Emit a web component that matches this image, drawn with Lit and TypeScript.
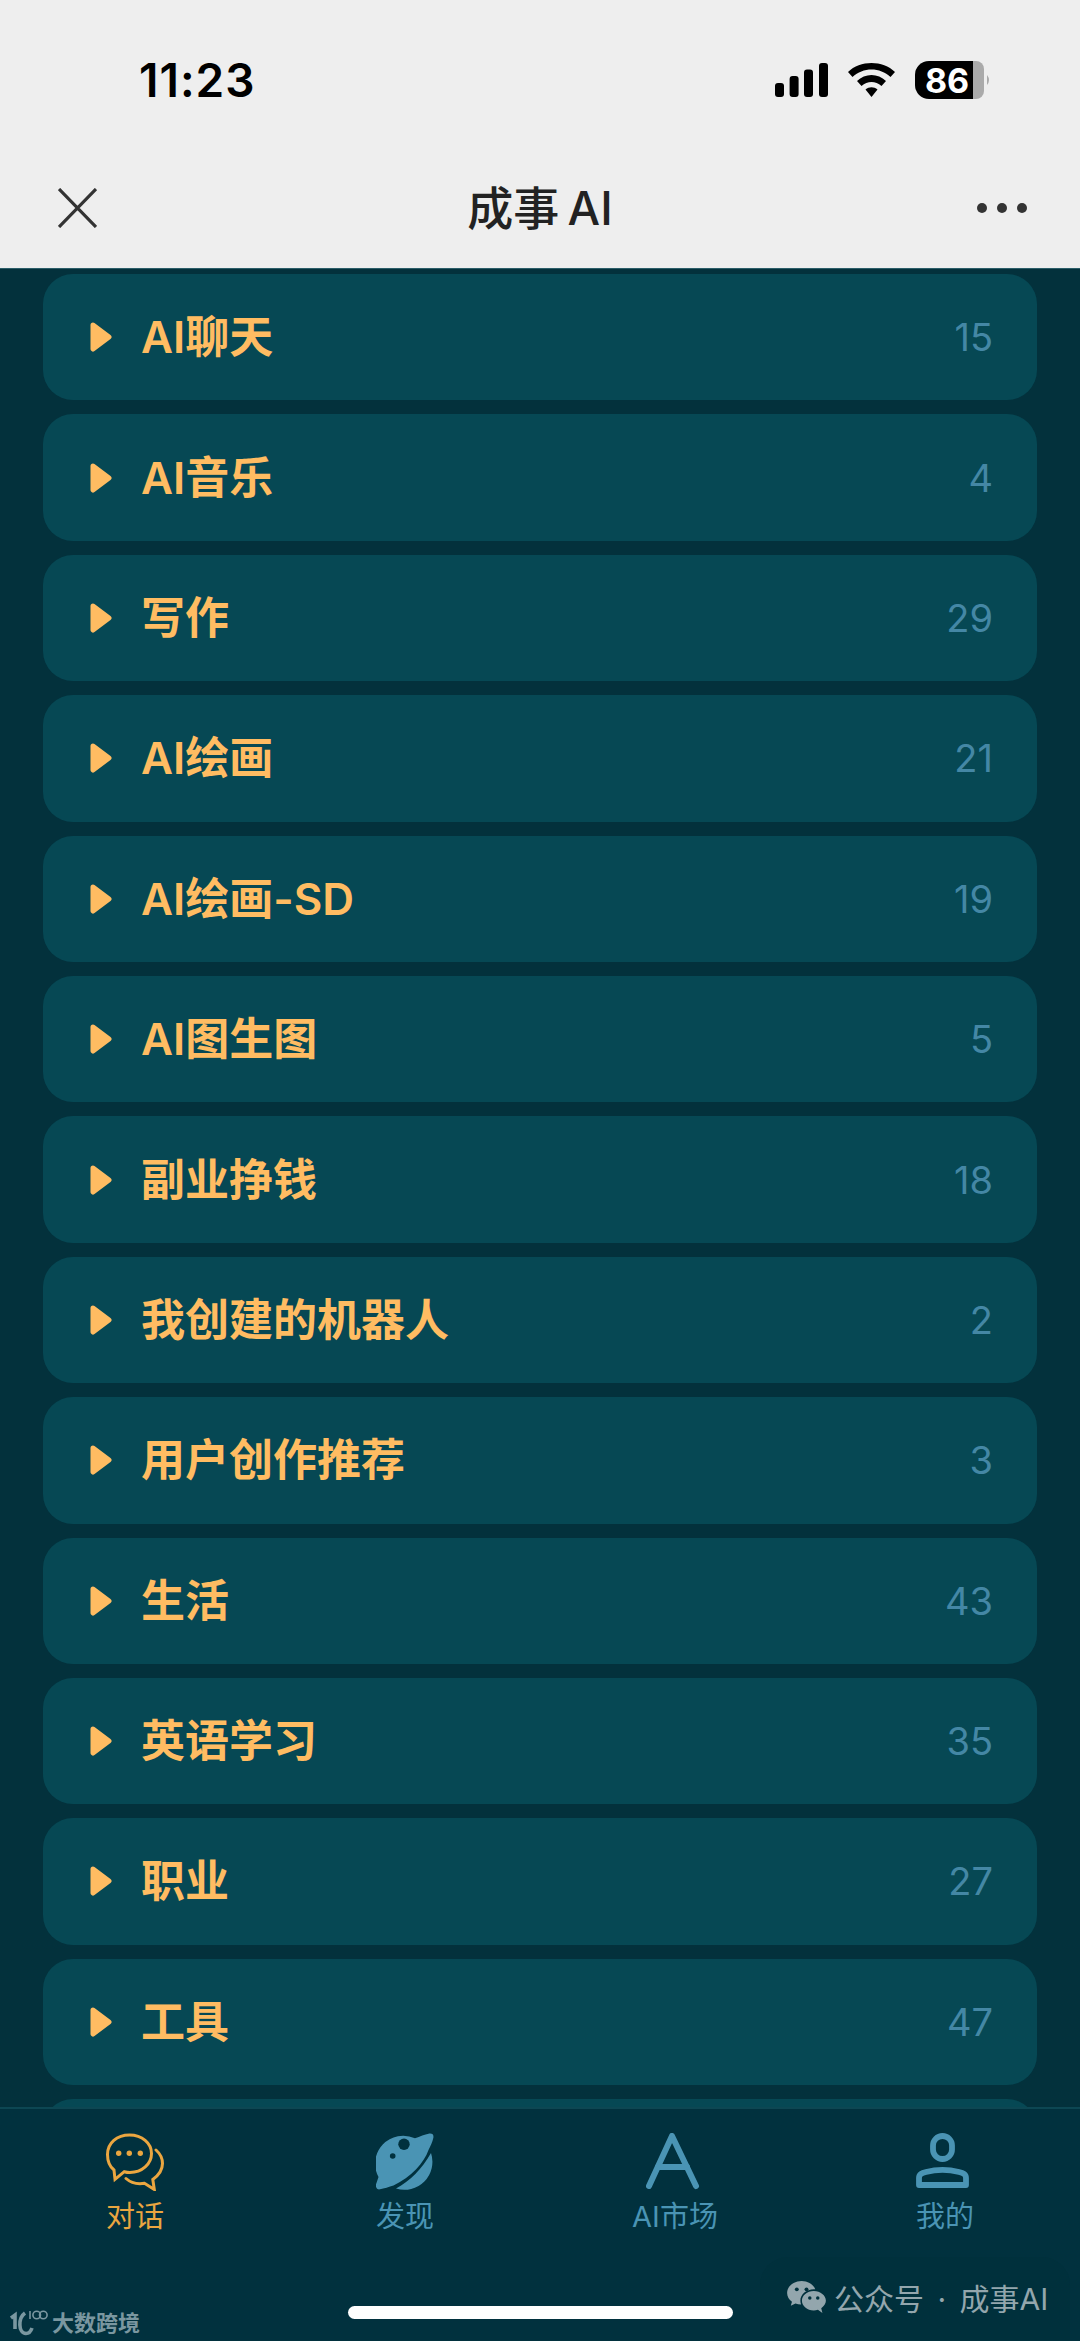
import {css, html, LitElement, svg} from 'lit';
import {customElement} from 'lit/decorators.js';

const categories: [string, number][] = [
  ['AI聊天', 15],
  ['AI音乐', 4],
  ['写作', 29],
  ['AI绘画', 21],
  ['AI绘画-SD', 19],
  ['AI图生图', 5],
  ['副业挣钱', 18],
  ['我创建的机器人', 2],
  ['用户创作推荐', 3],
  ['生活', 43],
  ['英语学习', 35],
  ['职业', 27],
  ['工具', 47],
  ['', 0],
];

const chatIcon = svg`
  <g fill="none" stroke="currentColor" stroke-width="3" stroke-linejoin="miter" stroke-linecap="round">
    <path d="M9 46.3 L8 37 C3 33 1.5 27 1.5 21.5 C1.5 10 11 2 23.5 2 C36 2 45.5 10 45.5 20.5 C45.5 31 36 39.5 24 39.5 C22 39.5 20 39.2 18.3 38.7 Z"/>
    <path d="M50 17 C54.5 21 56.5 26 56.5 30.5 C56.5 36 53 42 46.8 46.5 L48.3 56.5 L38.5 50.3 C31 51.5 25 50 20 45.5"/>
  </g>
  <g fill="currentColor">
    <circle cx="12.7" cy="20.3" r="2.7"/>
    <circle cx="23.3" cy="20.3" r="2.7"/>
    <circle cx="34.3" cy="20.3" r="2.7"/>
  </g>`;

const planetIcon = svg`
  <path fill="currentColor" d="M39 5.3 C44 3.5 49 1.5 52.5 0.8 C56.5 0 58 2 57.3 5 C56.5 9 54.5 13 52.5 17 C48 30 35 44 17.5 52.5 C13 54 8 55.5 4 56.3 C0.5 57 -1 53 0.3 50.5 L2.5 44 A28 28 0 0 1 39 5.3 Z"/>
  <path fill="currentColor" d="M55 20 A28 28 0 0 1 20 55.5 C34 48 46 36 55 20 Z"/>
  <circle cx="28" cy="11.3" r="5.7" fill="#01313e"/>
  <circle cx="16.7" cy="23" r="2.8" fill="#01313e"/>`;

const marketIcon = svg`
  <g fill="none" stroke="currentColor" stroke-width="6" stroke-linecap="round" stroke-linejoin="round">
    <path d="M3 53 L26 3 L50 53"/>
    <path d="M12 34 H41"/>
  </g>`;

const meIcon = svg`
  <g fill="none" stroke="currentColor" stroke-width="5.8" stroke-linejoin="round">
    <rect x="17" y="3" width="19" height="23" rx="9.5"/>
    <path d="M3 52 V45 C3 41 6 40 10 39 C20 36.5 33 36.5 43 39 C47 40 50 41 50 45 V52 Z"/>
  </g>`;

const tabs = [
  {label: '对话', icon: chatIcon, active: true},
  {label: '发现', icon: planetIcon, active: false},
  {label: 'AI市场', icon: marketIcon, active: false},
  {label: '我的', icon: meIcon, active: false},
];

@customElement('app-root')
export class AppRoot extends LitElement {
  static override styles = css`
    :host {
      display: block;
      position: relative;
      width: 1080px;
      height: 2341px;
      overflow: hidden;
      font-family: 'Inter', 'Noto Sans CJK SC', sans-serif;
      background: #03313c;
    }

    .page {
      display: flex;
      flex-direction: column;
      height: 2341px;
    }

    .top {
      flex: none;
      height: 268px;
      background: #eeeeee;
      border-bottom: 1px solid #2b5d68;
      box-sizing: content-box;
    }

    .status {
      height: 160px;
      display: flex;
      align-items: center;
      justify-content: space-between;
      padding: 0 88px 0 139px;
      box-sizing: border-box;
    }

    .time {
      font: 600 46px/1 'Inter', sans-serif;
      letter-spacing: 1px;
      color: #000;
    }

    .status svg {
      display: block;
    }

    .battery-text {
      font: 700 34px 'Inter', sans-serif;
      fill: #fff;
    }

    .nav {
      height: 96px;
      display: grid;
      grid-template-columns: 1fr auto 1fr;
      align-items: center;
      padding: 0 53px;
    }

    .nav svg {
      display: block;
    }

    .nav .close {
      margin-left: 5px;
    }

    .nav .more {
      justify-self: end;
    }

    .title {
      font-size: 46px;
      font-weight: 500;
      word-spacing: -4px;
      color: #222;
      white-space: nowrap;
      padding-bottom: 6px;
    }

    .list {
      flex: 1;
      min-height: 0;
      overflow: hidden;
      display: flex;
      flex-direction: column;
      gap: 14px;
      padding: 5px 43px 0;
    }

    .row {
      flex: none;
      height: 126.4px;
      border-radius: 30px;
      background: #064854;
      display: flex;
      align-items: center;
      padding: 0 44px 0 47px;
      box-sizing: border-box;
    }

    .row svg {
      flex: none;
      margin-right: 29px;
    }

    .name {
      flex: 1;
      font-size: 44px;
      font-weight: 600;
      color: #ffbc62;
      padding-bottom: 6px;
    }

    .count {
      font-size: 38px;
      color: #4487a5;
    }

    .tabbar {
      flex: none;
      height: 234px;
      box-sizing: border-box;
      background: #01313e;
      border-top: 2px solid #0d4753;
      display: grid;
      grid-template-columns: repeat(4, 270px);
    }

    .tab {
      display: flex;
      flex-direction: column;
      align-items: center;
      padding-top: 24px;
      color: #4a94b4;
      font-size: 29px;
      line-height: 40px;
    }

    .tab.active {
      color: #eba640;
    }

    .tab svg {
      display: block;
      margin-bottom: 6px;
    }

    .home {
      position: absolute;
      left: 348px;
      top: 2306px;
      width: 385px;
      height: 13px;
      border-radius: 7px;
      background: #fff;
    }

    .wm-right {
      position: absolute;
      left: 760px;
      top: 2257px;
      width: 310px;
      height: 84px;
      border-radius: 28px 28px 0 0;
      background: #00303c;
      display: flex;
      align-items: center;
      gap: 7px;
      padding: 0 0 4px 26px;
      box-sizing: border-box;
      color: #93a6ad;
      font-size: 30px;
      word-spacing: 5px;
      white-space: nowrap;
    }

    .wm-left {
      position: absolute;
      left: 10px;
      top: 2305px;
      display: flex;
      align-items: center;
      gap: 4px;
      color: #7a97a0;
      font-size: 22px;
      font-weight: 700;
    }
  `;

  override render() {
    return html`
      <div class="page">
        <div class="top">
          <div class="status">
            <span class="time">11:23</span>
            <svg width="217" height="40" viewBox="0 0 217 40">
              <rect x="0" y="23" width="9" height="14" rx="3"/>
              <rect x="14.6" y="16" width="9" height="21" rx="3"/>
              <rect x="29" y="9.5" width="9" height="27.5" rx="3"/>
              <rect x="44" y="3" width="9" height="34" rx="3"/>
              <path d="M73 12 C85 0 108 0 120 12 L115.5 17 C105 7 88 7 77.5 17 Z"/>
              <path d="M82 21 C90 13 103 13 111 21 L106.5 26 C100.5 20.5 92.5 20.5 86.5 26 Z"/>
              <path d="M90.5 29.5 C94 26.5 99 26.5 102.5 29.5 L96.5 37 Z"/>
              <path d="M154 1 H198 V39 H154 A14 14 0 0 1 140 25 V15 A14 14 0 0 1 154 1 Z"/>
              <path d="M198 1 H201 A8 8 0 0 1 209 9 V31 A8 8 0 0 1 201 39 H198 Z" fill="#aaaaaa"/>
              <path d="M212 15 Q216 20 212 25 Z" fill="#aaaaaa"/>
              <text class="battery-text" x="172" y="32.5" text-anchor="middle">86</text>
            </svg>
          </div>
          <div class="nav">
            <svg class="close" width="39" height="40" viewBox="0 0 39 40">
              <path d="M1 1 L38 39 M38 1 L1 39" stroke="#333" stroke-width="3.2" fill="none"/>
            </svg>
            <span class="title">成事 AI</span>
            <svg class="more" width="50" height="12" viewBox="0 0 50 12" fill="#333">
              <circle cx="5" cy="6" r="5"/>
              <circle cx="25" cy="6" r="5"/>
              <circle cx="45" cy="6" r="5"/>
            </svg>
          </div>
        </div>
        <div class="list">
          ${categories.map(
            ([name, count]) => html`
              <div class="row">
                ${name
                  ? html`<svg width="22" height="30" viewBox="0 0 22 30">
                        <path d="M3 3 L19 15 L3 27 Z" fill="#ffbc62" stroke="#ffbc62" stroke-width="5" stroke-linejoin="round"/>
                      </svg>
                      <span class="name">${name}</span>
                      <span class="count">${count}</span>`
                  : ''}
              </div>
            `
          )}
        </div>
        <div class="tabbar">
          ${tabs.map(
            (t) => html`
              <div class="tab ${t.active ? 'active' : ''}">
                <svg width="58" height="58" viewBox="0 0 58 58">${t.icon}</svg>
                <span>${t.label}</span>
              </div>
            `
          )}
        </div>
      </div>
      <div class="home"></div>
      <div class="wm-left">
        <svg width="38" height="30" viewBox="0 0 38 30" fill="none" stroke="currentColor">
          <path d="M1 12 L5 9 V23" stroke-width="3.6"/>
          <path d="M15 7 C8 12 8 27 16 27.5 C19 27.5 21 25 22 22" stroke-width="3.6"/>
          <path d="M20 5 V13" stroke-width="1.6"/>
          <circle cx="26.7" cy="9" r="3.8" stroke-width="1.6"/>
          <circle cx="33.3" cy="9" r="3.8" stroke-width="1.6"/>
        </svg>
        <span>大数跨境</span>
      </div>
      <div class="wm-right">
        <svg width="41" height="32" viewBox="0 0 40 33" fill="currentColor">
          <path d="M15 0 C6.7 0 0 5.5 0 12.3 C0 16 2 19.2 5 21.4 L3.8 25.6 L8.6 23.2 C10.4 23.8 12.4 24.2 14.4 24.2 C13.9 22.9 13.7 21.6 13.7 20.2 C13.7 13.6 19.9 8.4 27.6 8.4 L29 8.5 C27.2 3.6 21.6 0 15 0 Z"/>
          <path d="M27.5 10.4 C20.6 10.4 15.3 15 15.3 20.4 C15.3 25.8 20.6 30.4 27.5 30.4 C29 30.4 30.4 30.1 31.8 29.7 L36.4 33 L35.2 28 C38 26 40 23.4 40 20.4 C40 15 34.4 10.4 27.5 10.4 Z"/>
          <circle cx="10" cy="8.6" r="2" fill="#00303c"/>
          <circle cx="20" cy="8.6" r="2" fill="#00303c"/>
          <circle cx="23.4" cy="17.6" r="1.8" fill="#00303c"/>
          <circle cx="31.6" cy="17.6" r="1.8" fill="#00303c"/>
        </svg>
        <span>公众号 · 成事AI</span>
      </div>
    `;
  }
}

declare global {
  interface HTMLElementTagNameMap {
    'app-root': AppRoot;
  }
}
